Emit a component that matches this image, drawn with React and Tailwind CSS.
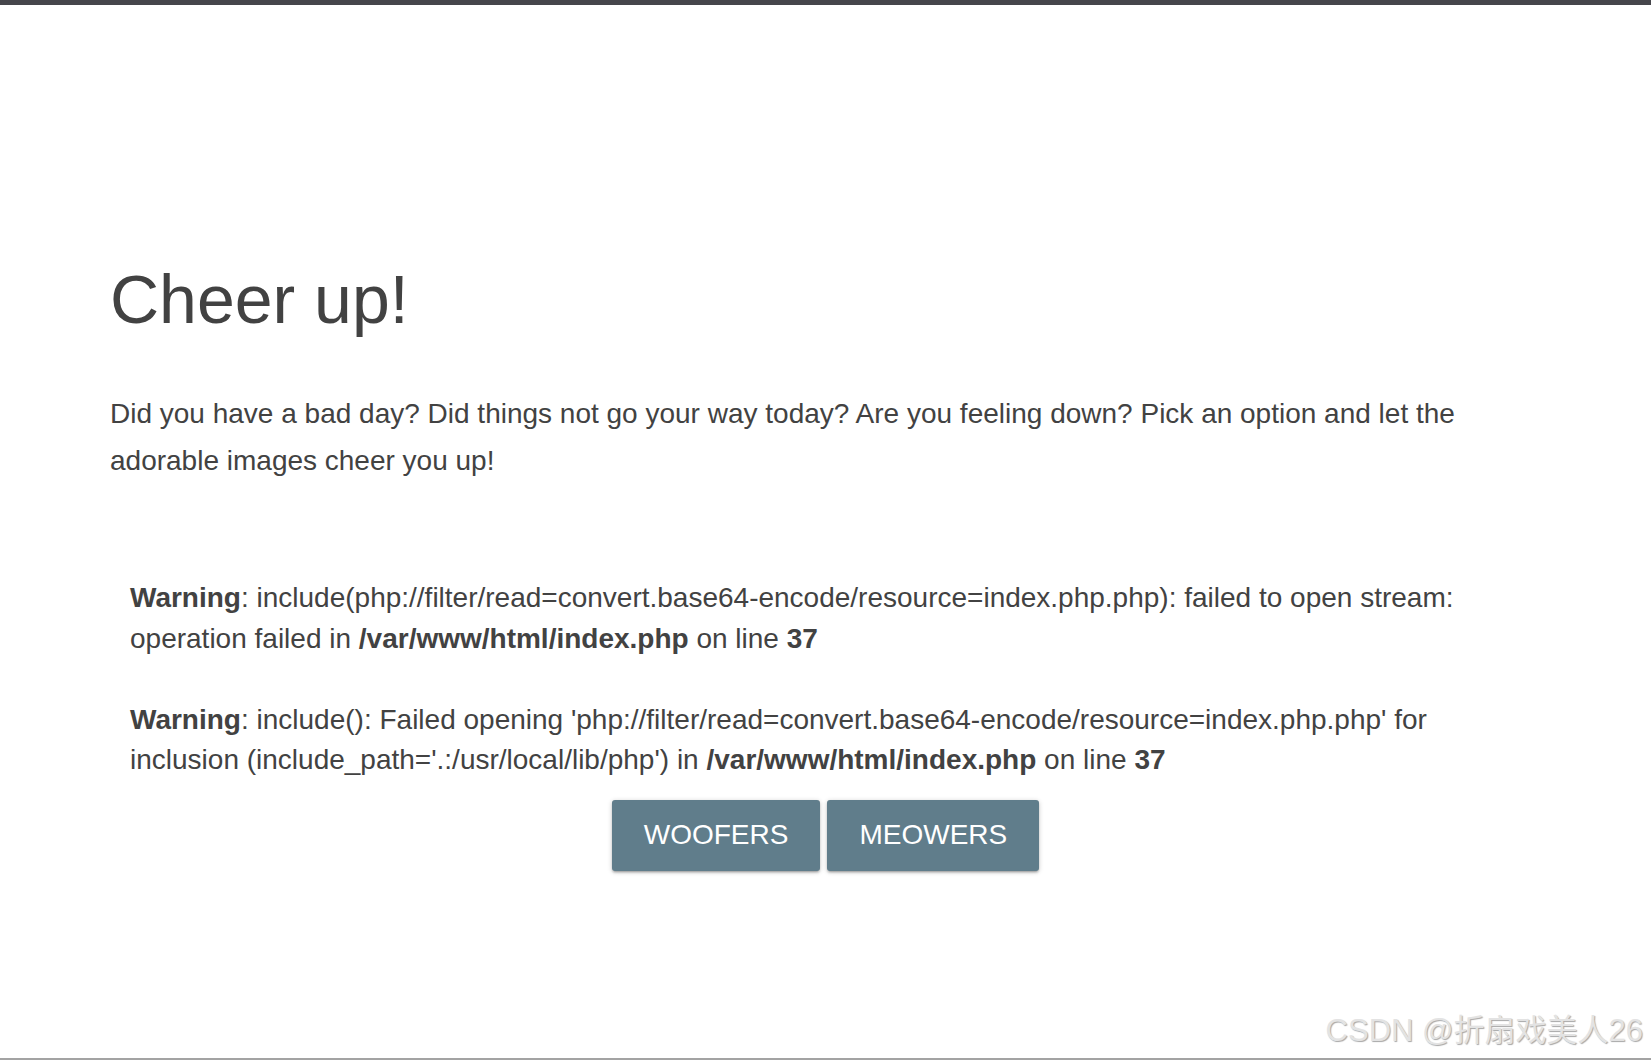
import React from "react";

const WarningLine = ({ children, className = "" }) => (
  <div className={className}>{children}</div>
);

const App = () => {
  return (
    <div className="relative h-[1060px] w-full overflow-hidden bg-white font-['Liberation_Sans',Arial,sans-serif] text-[#424242]">
      {/* top strip */}
      <div className="h-[5px] bg-[#46464b]" />

      <div className="px-[110px]">
        <h1 className="mt-[257px] text-[68px] leading-[1.1]">Cheer up!</h1>

        <p className="mt-[53px] text-[28px] leading-[47.3px]">
          Did you have a bad day? Did things not go your way today? Are you
          feeling down? Pick an option and let the adorable images cheer you
          up!
        </p>

        {/* php warnings */}
        <div className="mt-[94px] pl-[20px] text-[28px] leading-[40.5px]">
          <WarningLine>
            <b>Warning</b>:
            include(php://filter/read=convert.base64-encode/resource=index.php.php):
            failed to open stream: operation failed in{" "}
            <b>/var/www/html/index.php</b> on line <b>37</b>
          </WarningLine>
          <WarningLine className="mt-[40.5px]">
            <b>Warning</b>: include(): Failed opening
            'php://filter/read=convert.base64-encode/resource=index.php.php' for
            inclusion (include_path='.:/usr/local/lib/php') in{" "}
            <b>/var/www/html/index.php</b> on line <b>37</b>
          </WarningLine>
        </div>

        <div className="mt-[19px] flex justify-center gap-[7px]">
          <button className="flex h-[71px] items-center rounded-[3px] bg-[#607d8b] px-[32px] text-[28px] uppercase text-white shadow-[0_2px_2px_0_rgba(0,0,0,0.14),0_3px_1px_-2px_rgba(0,0,0,0.12),0_1px_5px_0_rgba(0,0,0,0.2)]">
            Woofers
          </button>
          <button className="flex h-[71px] items-center rounded-[3px] bg-[#607d8b] px-[32px] text-[28px] uppercase text-white shadow-[0_2px_2px_0_rgba(0,0,0,0.14),0_3px_1px_-2px_rgba(0,0,0,0.12),0_1px_5px_0_rgba(0,0,0,0.2)]">
            Meowers
          </button>
        </div>
      </div>

      {/* watermark */}
      <div className="absolute bottom-[14px] right-[8px] font-['Liberation_Sans','Noto_Sans_CJK_SC',sans-serif] text-[31px] leading-none text-[#e3e3e3] [text-shadow:1px_1px_1px_rgba(0,0,0,0.35)]">
        CSDN @折扇戏美人26
      </div>

      {/* bottom rule */}
      <div className="absolute bottom-0 left-0 h-[2px] w-full bg-[#a3a3a3]" />
    </div>
  );
};

export default App;
